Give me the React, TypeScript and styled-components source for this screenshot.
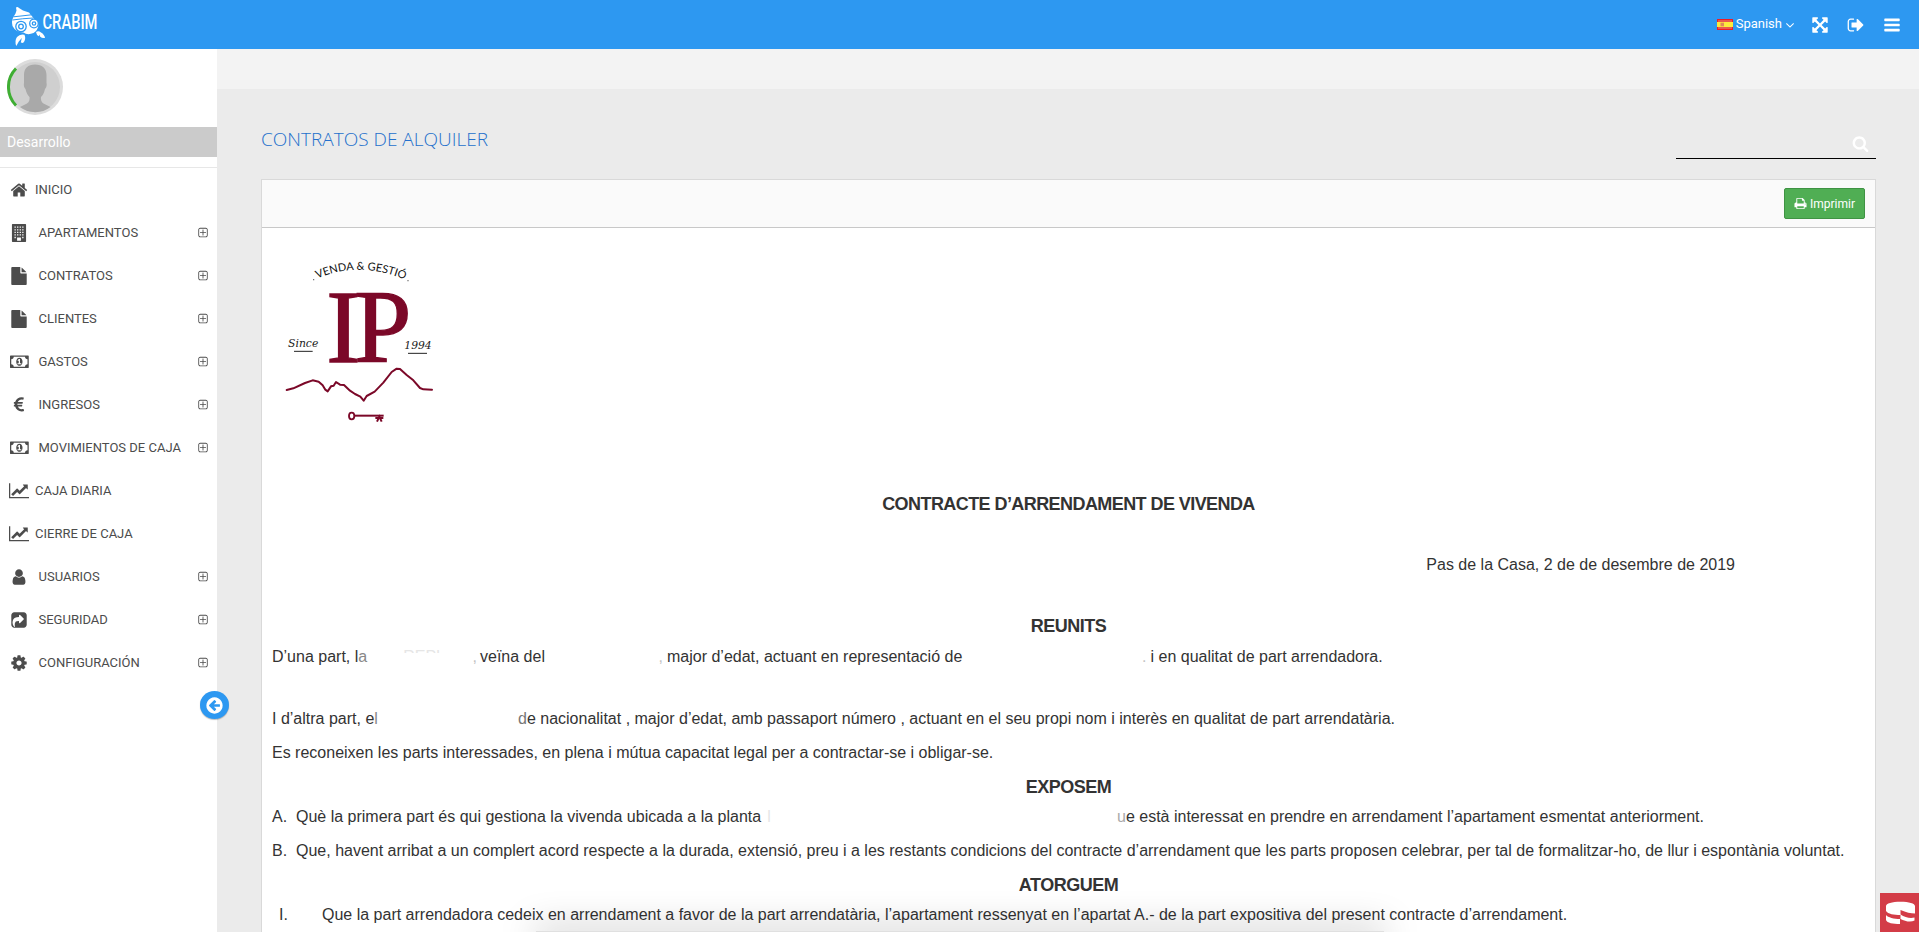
import React from "react";
import styled, { createGlobalStyle } from "styled-components";

const Global = createGlobalStyle`
  * { box-sizing: border-box; }
  body { margin: 0; background: #ebebeb; font-family: Roboto, "Liberation Sans", sans-serif; overflow: hidden; }
`;

/* ---------- icons (Font Awesome 4 grid, 1792 units per em) ---------- */
type Shape = { w: number; d: string };
const shapes: Record<string, Shape> = {
  home: { w: 1792, d: "M1472 992v480q0 26-19 45t-45 19h-384v-384h-256v384h-384q-26 0-45-19t-19-45v-480q0-1 .5-3t.5-3l575-474 575 474q1 2 1 6zm223-69l-62 74q-8 9-21 11h-3q-13 0-21-7l-692-577-692 577q-12 8-24 7-13-2-21-11l-62-74q-8-10-7-23.5t11-21.5l719-599q32-26 76-26t76 26l244 204v-195q0-14 9-23t23-9h192q14 0 23 9t9 23v408l219 182q10 8 11 21.5t-7 23.5z" },
  building: { w: 1792, d: "M256 0h1280q64 0 64 64v1664q0 64-64 64h-1280q-64 0-64-64v-1664q0-64 64-64zM448 256v128h128v-128zM704 256v128h128v-128zM960 256v128h128v-128zM1216 256v128h128v-128zM448 512v128h128v-128zM704 512v128h128v-128zM960 512v128h128v-128zM1216 512v128h128v-128zM448 768v128h128v-128zM704 768v128h128v-128zM960 768v128h128v-128zM1216 768v128h128v-128zM448 1024v128h128v-128zM704 1024v128h128v-128zM960 1024v128h128v-128zM1216 1024v128h128v-128zM448 1280v128h128v-128zM1216 1280v128h128v-128zM704 1344v320h384v-320z" },
  file: { w: 1792, d: "M1152 512v-472q22 14 36 28l408 408q14 14 28 36h-472zm-128 32q0 40 28 68t68 28h544v1056q0 40-28 68t-68 28h-1344q-40 0-68-28t-28-68v-1600q0-40 28-68t68-28h800v544z" },
  money: { w: 1920, d: "M768 1152h384v-96h-128v-448h-114l-148 137 77 80q42-37 55-57h2v288h-128v96zm512-256q0 70-21 142t-59.5 134-101.5 101-138 39-138-39-101.5-101-59.5-134-21-142 21-142 59.5-134 101.5-101 138-39 138 39 101.5 101 59.5 134 21 142zm512 256v-512q-106 0-181-75t-75-181h-1152q0 106-75 181t-181 75v512q106 0 181 75t75 181h1152q0-106 75-181t181-75zm128-832v1152q0 26-19 45t-45 19h-1792q-26 0-45-19t-19-45v-1152q0-26 19-45t45-19h1792q26 0 45 19t19 45z" },
  euro: { w: 1792, d: "M1360 1307l35 159q3 12-3 22.5t-17 14.5l-5 1q-4 2-10.5 3.5t-16 4.5-21.5 5.5-25.5 5-30 5-33.5 4.5-36.5 3-38.5 1q-234 0-409-130.5t-238-351.5h-95q-13 0-22.5-9.5t-9.5-22.5v-113q0-13 9.5-22.5t22.5-9.5h66q-2-57 1-105h-67q-14 0-23-9t-9-23v-114q0-14 9-23t23-9h98q67-210 243.5-338t400.5-128q102 0 194 23 11 3 20 15 6 11 3 24l-43 159q-3 13-14 19.5t-24 2.5l-4-1q-4-1-11.5-2.5l-17.5-3.5-22.5-3.5-26-3-29-2.5-29.5-1q-126 0-226 64t-150 176h468q16 0 25 12 10 12 7 26l-24 114q-5 26-32 26h-488q-3 37 0 105h459q15 0 25 12 9 12 6 27l-24 112q-2 11-11 18.5t-20 7.5h-387q48 117 149.5 185.5t228.5 68.5q18 0 36-1.5t33.5-3.5 29.5-4.5 24.5-5 18.5-4.5l12-3 5-2q13-5 26 2 12 7 15 21z" },
  chart: { w: 2048, d: "M2048 1536v128h-2048v-1536h128v1408h1920zm-128-1248v435q0 21-19.5 29.5t-35.5-7.5l-121-121-633 633q-10 10-23 10t-23-10l-233-233-416 416-192-192 585-585q10-10 23-10t23 10l233 233 464-464-121-121q-16-16-7.5-35.5t29.5-19.5h435q14 0 23 9t9 23z" },
  user: { w: 1792, d: "M1536 1399q0 109-62.5 187t-150.5 78h-854q-88 0-150.5-78t-62.5-187q0-85 8.5-160.5t31.5-152 58.5-131 94-89 134.5-34.5q131 128 313 128t313-128q76 0 134.5 34.5t94 89 58.5 131 31.5 152 8.5 160.5zm-256-887q0 159-112.5 271.5t-271.5 112.5-271.5-112.5-112.5-271.5 112.5-271.5 271.5-112.5 271.5 112.5 112.5 271.5z" },
  share: { w: 1792, d: "M1005 1197l352-352q19-19 19-45t-19-45l-352-352q-30-31-69-14-40 17-40 59v160q-119 0-216 19.5t-162.5 51-114 79-76.5 95.5-44.5 109-21.5 111.5-5 110.5q0 181 167 404 11 12 25 12 7 0 13-3 22-9 19-33-44-354 62-473 46-52 130-75.5t224-23.5v160q0 42 40 59 12 5 24 5 26 0 45-19zm659-781v960q0 119-84.5 203.5t-203.5 84.5h-960q-119 0-203.5-84.5t-84.5-203.5v-960q0-119 84.5-203.5t203.5-84.5h960q119 0 203.5 84.5t84.5 203.5z" },
  cog: { w: 1792, d: "M1152 896q0-106-75-181t-181-75-181 75-75 181 75 181 181 75 181-75 75-181zm512-109v222q0 12-8 23t-20 13l-185 28q-19 54-39 91 35 50 107 138 10 12 10 25t-9 23q-27 37-99 108t-94 71q-12 0-26-9l-138-108q-44 23-91 38-16 136-29 186-7 28-36 28h-222q-14 0-24.5-8.5t-11.5-21.5l-28-184q-49-16-90-37l-141 107q-10 9-25 9-14 0-25-11-126-114-165-168-7-10-7-23 0-12 8-23 15-21 51-66.5t54-70.5q-27-50-41-99l-183-27q-13-2-21-12.5t-8-23.5v-222q0-12 8-23t19-13l186-28q14-46 39-92-40-57-107-138-10-12-10-24 0-10 9-23 26-36 98.5-107.5t94.5-71.5q13 0 26 10l138 107q44-23 91-38 16-136 29-186 7-28 36-28h222q14 0 24.5 8.5t11.5 21.5l28 184q49 16 90 37l142-107q9-9 24-9 13 0 25 10 129 119 165 170 7 8 7 22 0 12-8 23-15 21-51 66.5t-54 70.5q26 50 41 98l183 28q13 2 21 12.5t8 23.5z" },
  plus: { w: 1792, d: "M1344 800v64q0 14-9 23t-23 9h-352v352q0 14-9 23t-23 9h-64q-14 0-23-9t-9-23v-352h-352q-14 0-23-9t-9-23v-64q0-14 9-23t23-9h352v-352q0-14 9-23t23-9h64q14 0 23 9t9 23v352h352q14 0 23 9t9 23zm128 448v-832q0-66-47-113t-113-47h-832q-66 0-113 47t-47 113v832q0 66 47 113t113 47h832q66 0 113-47t47-113zm128-832v832q0 119-84.5 203.5t-203.5 84.5h-832q-119 0-203.5-84.5t-84.5-203.5v-832q0-119 84.5-203.5t203.5-84.5h832q119 0 203.5 84.5t84.5 203.5z" },
  bars: { w: 1792, d: "M192 1280h1408q64 0 64 64v128q0 64-64 64h-1408q-64 0-64-64v-128q0-64 64-64zM192 768h1408q64 0 64 64v128q0 64-64 64h-1408q-64 0-64-64v-128q0-64 64-64zM192 256h1408q64 0 64 64v128q0 64-64 64h-1408q-64 0-64-64v-128q0-64 64-64z" },
  signout: { w: 1792, d: "M704 1440q0 4 1 20t.5 26.5-3 23.5-10 19.5-20.5 6.5h-320q-119 0-203.5-84.5t-84.5-203.5v-704q0-119 84.5-203.5t203.5-84.5h320q13 0 22.5 9.5t9.5 22.5q0 4 1 20t.5 26.5-3 23.5-10 19.5-20.5 6.5h-320q-66 0-113 47t-47 113v704q0 66 47 113t113 47h312l11.5 1 11.5 3 8 5.5 7 9 2 13.5zm928-544q0 26-19 45l-544 544q-19 19-45 19t-45-19-19-45v-288h-448q-26 0-45-19t-19-45v-384q0-26 19-45t45-19h448v-288q0-26 19-45t45-19 45 19l544 544q19 19 19 45z" },
  expand: { w: 1792, d: "M1411 541l-355 355 355 355 144-144q29-31 70-14 39 17 39 59v448q0 26-19 45t-45 19h-448q-42 0-59-40-17-39 14-69l144-144-355-355-355 355 144 144q31 30 14 69-17 40-59 40h-448q-26 0-45-19t-19-45v-448q0-42 40-59 39-17 69 14l144 144 355-355-355-355-144 144q-19 19-45 19-12 0-24-5-40-17-40-59v-448q0-26 19-45t45-19h448q42 0 59 40 17 39-14 69l-144 144 355 355 355-355-144-144q-31-30-14-69 17-40 59-40h448q26 0 45 19t19 45v448q0 42-39 59-13 5-25 5-26 0-45-19z" },
  search: { w: 1792, d: "M1216 832q0-185-131.5-316.5t-316.5-131.5-316.5 131.5-131.5 316.5 131.5 316.5 316.5 131.5 316.5-131.5 131.5-316.5zm512 832q0 52-38 90t-90 38q-54 0-90-38l-343-342q-179 124-399 124-143 0-273.5-55.5t-225-150-150-225-55.5-273.5 55.5-273.5 150-225 225-150 273.5-55.5 273.5 55.5 225 150 150 225 55.5 273.5q0 220-124 399l343 343q37 37 37 90z" },
  print: { w: 1792, d: "M448 1536h896v-256h-896v256zm0-640h896v-384h-160q-40 0-68-28t-28-68v-160h-640v640zm1152 64q0-26-19-45t-45-19-45 19-19 45 19 45 45 19 45-19 19-45zm128 0v416q0 13-9.5 22.5t-22.5 9.5h-224v160q0 40-28 68t-68 28h-960q-40 0-68-28t-28-68v-160h-224q-13 0-22.5-9.5t-9.5-22.5v-416q0-79 56.5-135.5t135.5-56.5h64v-544q0-40 28-68t68-28h672q40 0 88 20t76 48l152 152q28 28 48 76t20 88v256h64q79 0 135.5 56.5t56.5 135.5z" },
  down: { w: 1792, d: "M1395 736q0 13-10 23l-466 466q-10 10-23 10t-23-10l-466-466q-10-10-10-23t10-23l50-50q10-10 23-10t23 10l393 393 393-393q10-10 23-10t23 10l50 50q10 10 10 23z" },
  back: { w: 1792, d: "M1408 960v-128q0-26-19-45t-45-19h-502l189-189q19-19 19-45t-19-45l-91-91q-18-18-45-18t-45 18l-362 362-91 91q-18 18-18 45t18 45l91 91 362 362q18 18 45 18t45-18l91-91q18-18 18-45t-18-45l-189-189h502q26 0 45-19t19-45zm256-64q0 209-103 385.5t-279.5 279.5-385.5 103-385.5-103-279.5-279.5-103-385.5 103-385.5 279.5-279.5 385.5-103 385.5 103 279.5 279.5 103 385.5z" },
};

const IconSvg = styled.svg`
  display: block;
  flex: none;
  fill: currentColor;
`;
function Icon({ name, size }: { name: string; size: number }) {
  const s = shapes[name];
  return (
    <IconSvg width={(size * s.w) / 1792} height={size} viewBox={`0 0 ${s.w} 1792`}>
      <path fillRule="evenodd" d={s.d} />
    </IconSvg>
  );
}

/* ---------- shell ---------- */
const Page = styled.div`
  position: relative;
  width: 100%;
  height: 932px;
  overflow: hidden;
  display: flex;
  flex-direction: column;
`;
const TopBar = styled.header`
  flex: none;
  height: 49px;
  background: #2d98f1;
  color: #fff;
  display: flex;
  align-items: center;
  justify-content: space-between;
  padding: 0 18px 0 8px;
`;
const BrandSvg = styled.svg`
  display: block;
  overflow: visible;
`;
const TopActions = styled.div`
  display: flex;
  align-items: center;
  height: 48px;
`;
const Language = styled.div`
  display: flex;
  align-items: center;
  font-size: 13px;
  line-height: 18px;
  margin-right: 14px;
`;
const LanguageName = styled.span`
  margin: 0 1px 0 3px;
  padding-bottom: 2px;
`;
const Action = styled.div<{ $gap: number }>`
  margin-right: ${(p) => p.$gap}px;
`;
const Body = styled.div`
  flex: 1;
  min-height: 0;
  display: flex;
`;
const Sidebar = styled.aside`
  width: 217px;
  flex: none;
  background: #fff;
  position: relative;
  color: #4c4c4c;
`;
const AvatarBox = styled.div`
  height: 78px;
  padding: 10px 0 0 7px;
`;
const Role = styled.div`
  height: 30px;
  line-height: 30px;
  padding-left: 7px;
  background: #cbcbcb;
  color: #fff;
  font-size: 14px;
`;
const Menu = styled.nav`
  margin-top: 10px;
  border-top: 1px solid #e7e7e7;
`;
const MenuItem = styled.div`
  height: 43px;
  display: flex;
  align-items: center;
  font-size: 13px;
  padding-right: 8px;
`;
const MenuIcon = styled.span<{ $wide: boolean }>`
  width: ${(p) => (p.$wide ? 38.5 : 35)}px;
  display: flex;
  justify-content: center;
  padding-left: ${(p) => (p.$wide ? 0 : 3)}px;
`;
const MenuLabel = styled.span`
  flex: 1;
  white-space: nowrap;
`;
const Collapse = styled.button`
  position: absolute;
  left: 200px;
  top: 642px;
  width: 29px;
  height: 28px;
  border: 0;
  border-radius: 50%;
  padding: 0;
  background: #2d98f1;
  color: #fff;
  display: flex;
  align-items: center;
  justify-content: center;
  box-shadow: 0 1px 1px rgba(0, 0, 0, 0.25);
`;
const Main = styled.main`
  flex: 1;
  min-width: 0;
  display: flex;
  flex-direction: column;
`;
const Ribbon = styled.div`
  height: 40px;
  flex: none;
  background: #f3f3f3;
`;
const TitleRow = styled.div`
  height: 70px;
  flex: none;
  margin: 0 43px 20px 44px;
  display: flex;
  justify-content: space-between;
  align-items: flex-end;
`;
const PageTitle = styled.h1`
  margin: 0 0 6px;
  font: 300 19px/28px "Open Sans", sans-serif;
  color: #2470cc;
`;
const SearchField = styled.div`
  width: 200px;
  height: 30px;
  border-bottom: 1px solid #000;
  color: #fff;
  display: flex;
  justify-content: flex-end;
  padding: 6px 7px 0 0;
`;
const Panel = styled.section`
  margin: 0 43px 0 44px;
  flex: 1;
  min-height: 0;
  border: 1px solid #d9d9d9;
  border-bottom: 0;
  background: #fff;
  overflow: hidden;
`;
const PanelHead = styled.div`
  height: 48px;
  background: #fafafa;
  border-bottom: 1px solid #c8c8c8;
  display: flex;
  justify-content: flex-end;
  padding: 8px 10px 0 0;
`;
const PrintButton = styled.button`
  width: 81px;
  height: 31px;
  border: 1px solid #3f9343;
  border-radius: 2px;
  background: #50ae54;
  color: #fff;
  font: 12px Roboto, sans-serif;
  padding: 0;
  display: flex;
  align-items: center;
  justify-content: center;
  gap: 3px;
`;

/* ---------- document ---------- */
const Doc = styled.article`
  padding: 22px 10px 0;
  font: 16px/20px "Liberation Sans", Arial, sans-serif;
  color: #333;
  display: flex;
  flex-direction: column;
`;
const Crest = styled.svg`
  display: block;
  flex: none;
  margin-left: 2px;
`;
const Heading = styled.h2<{ $top: number; $ls?: number }>`
  margin: ${(p) => p.$top}px 0 0;
  height: 20px;
  font-size: 18px;
  line-height: 20px;
  font-weight: 700;
  letter-spacing: ${(p) => p.$ls ?? -0.5}px;
  text-align: center;
`;
const Line = styled.div<{ $top: number; $indent?: number }>`
  margin-top: ${(p) => p.$top}px;
  padding-left: ${(p) => p.$indent ?? 0}px;
  height: 20px;
  display: flex;
  white-space: nowrap;
`;
const DateLine = styled(Line)`
  justify-content: flex-end;
  padding-right: 130px;
`;
const Part = styled.span<{ $w?: number }>`
  flex: none;
  display: flex;
  white-space: pre;
  width: ${(p) => (p.$w ? p.$w + "px" : "auto")};
`;
const Faded = styled.span<{ $tone: string }>`
  color: ${(p) => p.$tone};
`;
/* erased word whose last trace stays visible before the next part */
const Trace = styled.span<{ $after: number }>`
  margin-left: auto;
  margin-right: ${(p) => p.$after}px;
  color: #c4c4c4;
`;
/* only the tops of the letters show */
const Tops = styled.span<{ $before: number; $h: number }>`
  margin-left: ${(p) => p.$before}px;
  height: ${(p) => p.$h}px;
  overflow: hidden;
  color: #e6e6e6;
`;
const BottomShade = styled.div`
  position: absolute;
  left: 536px;
  top: 931px;
  width: 848px;
  height: 10px;
  box-shadow: 0 0 36px 2px rgba(0, 0, 0, 0.28);
  background: #e0e0e0;
`;
const Badge = styled.svg`
  position: absolute;
  right: 0;
  bottom: 0;
`;

const menu: { icon: string; label: string; more?: boolean }[] = [
  { icon: "home", label: "INICIO" },
  { icon: "building", label: "APARTAMENTOS", more: true },
  { icon: "file", label: "CONTRATOS", more: true },
  { icon: "file", label: "CLIENTES", more: true },
  { icon: "money", label: "GASTOS", more: true },
  { icon: "euro", label: "INGRESOS", more: true },
  { icon: "money", label: "MOVIMIENTOS DE CAJA", more: true },
  { icon: "chart", label: "CAJA DIARIA" },
  { icon: "chart", label: "CIERRE DE CAJA" },
  { icon: "user", label: "USUARIOS", more: true },
  { icon: "share", label: "SEGURIDAD", more: true },
  { icon: "cog", label: "CONFIGURACIÓN", more: true },
];

function Brand() {
  return (
    <BrandSvg width="92" height="46" viewBox="8 2 92 46">
      <g fill="#fff">
        <path d="M16 7.5q1.500-1 3 .5l4 2.500 6 2 4 5 2 2.500q3 1.500 3.500 5-.5 5-5 8-6 2.500-10-.5-8-.5-11-6.500-1.500-5.500 1.500-10l1.500-2.500 1-3z" />
        <path d="M36 32q2.500-1.500 5 .5 3.500 2 4 5.500-3 .5-5-1.500l-.5-2-.8 1.700q-2.200-1-2.700-4.200z" />
        <path d="M16.300 46q-2-5 .7-9 3-3.500 7.500-2.300 2 4.800-1.500 8.300l-2.200-.6 1-4.400-3 3.500z" />
      </g>
      <path d="M13.500 16.800q8-.8 18-2M12.500 20q10-1.500 21-2" stroke="#2d98f1" strokeWidth="1" fill="none" />
      <g fill="#fff" stroke="#2d98f1" strokeWidth="1.300">
        <circle cx="21" cy="26.500" r="5.200" />
        <circle cx="34" cy="23.500" r="4.300" />
      </g>
      <g fill="none" stroke="#2d98f1" strokeWidth="1.300">
        <circle cx="21" cy="26.500" r="2.300" />
        <circle cx="34" cy="23.500" r="1.700" />
      </g>
      <text x="42.500" y="28.500" fill="#fff" fontFamily="Roboto, sans-serif" fontSize="21" fontWeight="500" textLength="55" lengthAdjust="spacingAndGlyphs">
        CRABIM
      </text>
    </BrandSvg>
  );
}

function Avatar() {
  return (
    <svg width="56" height="56" viewBox="0 0 56 56">
      <circle cx="28" cy="28" r="28" fill="#dcdcdc" />
      <circle cx="28" cy="28" r="25" fill="#cfcfcf" />
      <path fill="#a9a9a9" d="M28 5.500c-7 0-11 4-11 10.500v8c-.5 2 0 4.500 1.500 6 1 4 2 6 4 8 .5 4-1 6-4.500 7.500L13 48a25 25 0 0 0 30.500 0l-5-2.500c-3.500-1.500-5-3.500-4.500-7.500 2-2 3-4 4-8 1.500-1.500 2-4 1.500-6v-8C39.500 9.500 35 5.500 28 5.500z" />
      <path d="M9 9.500a26.500 26.500 0 0 0 0 37" fill="none" stroke="#3fae33" strokeWidth="3" />
    </svg>
  );
}

function Flag() {
  return (
    <svg width="16" height="11" viewBox="0 0 16 11">
      <rect width="16" height="11" fill="#ee1c25" />
      <rect x="1" y="1" width="14" height="9" fill="#e8584f" />
      <rect x="0" y="3" width="16" height="5" fill="#fdea3c" />
      <rect x="3.500" y="3.700" width="3.500" height="3.600" fill="#e08a5a" />
    </svg>
  );
}

function CrestArt() {
  return (
    <Crest width="160" height="180" viewBox="72 420 480 540">
      <defs>
        <path id="arc" d="M202 506 Q330 450 472 512" />
      </defs>
      <text fontFamily="Lato, sans-serif" fontSize="33" fill="#111">
        <textPath href="#arc" textLength="270" lengthAdjust="spacingAndGlyphs">VENDA &amp; GESTIÓ</textPath>
      </text>
      <g fill="#555">
        <circle cx="191" cy="509" r="2" />
        <circle cx="474" cy="512" r="2" />
      </g>
      <text x="229" y="757" fill="#7b0828" stroke="#7b0828" strokeWidth="4" fontFamily="Liberation Serif, serif" fontSize="308" letterSpacing="-19">
        IP
      </text>
      <g fontFamily="DejaVu Serif, serif" fontStyle="italic" fontSize="35" fill="#222">
        <text x="114" y="711" textLength="91" lengthAdjust="spacingAndGlyphs">Since</text>
        <text x="463" y="717" textLength="82" lengthAdjust="spacingAndGlyphs">1994</text>
      </g>
      <path d="M132 724H188M474 730H531" stroke="#222" strokeWidth="3" />
      <path d="M110 840 130 835 165 819 188 811 206 815 218 826 226 839 233 844 243 829 251 827 258 816 270 824 282 825 300 842 315 852 331 860 341 872 350 858 374 845 400 818 425 786 440 776 450 777 470 795 490 811 510 834 520 838 546 839" fill="none" stroke="#7b0828" strokeWidth="6" strokeLinejoin="round" strokeLinecap="round" />
      <g fill="none" stroke="#7b0828">
        <ellipse cx="305" cy="918" rx="8" ry="10" strokeWidth="5.500" />
        <path d="M314 917H401" strokeWidth="6" />
        <path d="M381 935 388 920 395 935M376 924H400" strokeWidth="6" />
      </g>
    </Crest>
  );
}

export default function App() {
  return (
    <Page>
      <Global />
      <TopBar>
        <Brand />
        <TopActions>
          <Language>
            <Flag />
            <LanguageName>Spanish</LanguageName>
            <Icon name="down" size={14} />
          </Language>
          <Action $gap={18}><Icon name="expand" size={18} /></Action>
          <Action $gap={18}><Icon name="signout" size={18} /></Action>
          <Action $gap={0}><Icon name="bars" size={18} /></Action>
        </TopActions>
      </TopBar>
      <Body>
        <Sidebar>
          <AvatarBox><Avatar /></AvatarBox>
          <Role>Desarrollo</Role>
          <Menu>
            {menu.map((m) => (
              <MenuItem key={m.label}>
                <MenuIcon $wide={!!m.more}><Icon name={m.icon} size={m.icon === "chart" || m.icon === "money" ? 17.500 : 18} /></MenuIcon>
                <MenuLabel>{m.label}</MenuLabel>
                {m.more && <Icon name="plus" size={12} />}
              </MenuItem>
            ))}
          </Menu>
          <Collapse><Icon name="back" size={19} /></Collapse>
        </Sidebar>
        <Main>
          <Ribbon />
          <TitleRow>
            <PageTitle>CONTRATOS DE ALQUILER</PageTitle>
            <SearchField><Icon name="search" size={17} /></SearchField>
          </TitleRow>
          <Panel>
            <PanelHead>
              <PrintButton><Icon name="print" size={13} />Imprimir</PrintButton>
            </PanelHead>
            <Doc>
              <CrestArt />
              <Heading $top={64} $ls={-0.57}>CONTRACTE D’ARRENDAMENT DE VIVENDA</Heading>
              <DateLine $top={41}>Pas de la Casa, 2 de de desembre de 2019</DateLine>
              <Heading $top={41}>REUNITS</Heading>
              <Line $top={11}>
                <Part $w={208}>
                  D’una part, l<Faded $tone="#888">a</Faded>
                  <Tops $before={36} $h={6}>REPL</Tops>
                  <Trace $after={3}>,</Trace>
                </Part>
                <Part $w={187}>veïna del<Trace $after={4}>,</Trace></Part>
                <Part $w={483.500}>major d’edat, actuant en representació de<Trace $after={4}>.</Trace></Part>
                <Part>i en qualitat de part arrendadora.</Part>
              </Line>
              <Line $top={42}>
                <Part $w={246}>
                  I d’altra part, e<Faded $tone="#888">l</Faded>
                </Part>
                <Part><Faded $tone="#777">d</Faded>e nacionalitat , major d’edat, amb passaport número , actuant en el seu propi nom i interès en qualitat de part arrendatària.</Part>
              </Line>
              <Line $top={14}>
                <Part>Es reconeixen les parts interessades, en plena i mútua capacitat legal per a contractar-se i obligar-se.</Part>
              </Line>
              <Heading $top={14}>EXPOSEM</Heading>
              <Line $top={10}>
                <Part $w={24}>A.</Part>
                <Part $w={821}>
                  Què la primera part és qui gestiona la vivenda ubicada a la planta
                  <Tops $before={6} $h={16}>l</Tops>
                </Part>
                <Part><Faded $tone="#aaa">u</Faded>e està interessat en prendre en arrendament l’apartament esmentat anteriorment.</Part>
              </Line>
              <Line $top={14}>
                <Part $w={24}>B.</Part>
                <Part>Que, havent arribat a un complert acord respecte a la durada, extensió, preu i a les restants condicions del contracte d’arrendament que les parts proposen celebrar, per tal de formalitzar-ho, de llur i espontània voluntat.</Part>
              </Line>
              <Heading $top={14}>ATORGUEM</Heading>
              <Line $top={10} $indent={7}>
                <Part $w={43}>I.</Part>
                <Part>Que la part arrendadora cedeix en arrendament a favor de la part arrendatària, l’apartament ressenyat en l’apartat A.- de la part expositiva del present contracte d’arrendament.</Part>
              </Line>
            </Doc>
          </Panel>
        </Main>
      </Body>
      <BottomShade />
      <Badge width="39" height="39" viewBox="0 0 39 39">
        <rect width="39" height="39" fill="#d33c47" />
        <path fill="#fff" d="M6 13C6 10.500 12 8.700 20.500 8.700S35 10.500 35 13V20.500C31 20.500 26 19.500 20.500 17V22C14 22 8 21 6 18ZM6 22C8 24.500 14 26 20 26V31C13 31 7 30 6 27ZM20.500 21.500C25 24.500 30 25.500 34.500 24.500V27.500C31 29.500 25 28.500 20.500 26Z" />
      </Badge>
    </Page>
  );
}
